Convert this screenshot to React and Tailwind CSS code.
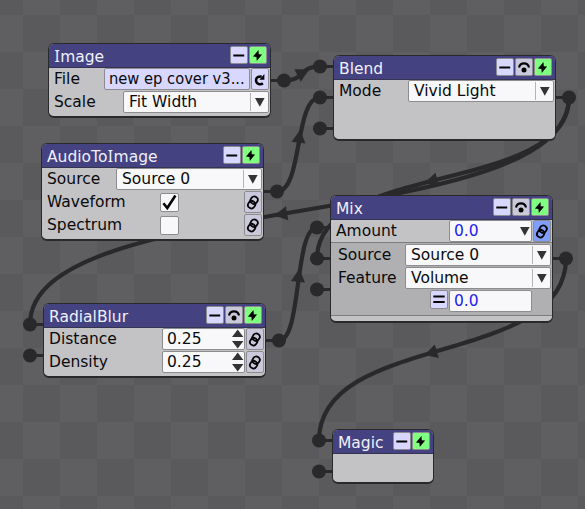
import React from "react";

const INK = "#29292b";

function Text({ children, className = "" }) {
  return <span className={`whitespace-pre leading-[23px] ${className}`}>{children}</span>;
}

// Capital I drawn with serifs
function SerifI() {
  return <span className="inline-block w-[6.2px] text-center font-['Noto_Sans'] leading-none">I</span>;
}

function Btn({ color, children, className = "h-[19px]" }) {
  return (
    <div className={`flex w-[18px] shrink-0 items-center justify-center rounded-[2px] border border-[#8c8c90] ${color} ${className}`}>
      <svg width="16" height="17" viewBox="0 0 16 17" fill="none" stroke="#050505">{children}</svg>
    </div>
  );
}

const Minus = () => (
  <Btn color="bg-[#d7d7ff]" className="h-[18px]"><path d="M2.3 8.5H13.2" strokeWidth="2" /></Btn>
);
const Bypass = () => (
  <Btn color="bg-[#cac9dc]" className="h-[18px]">
    <path d="M3 8.4C4.2 3 11.8 3 13 8.4" strokeWidth="2.2" />
    <circle cx="8" cy="11" r="2.5" fill="#050505" stroke="none" />
  </Btn>
);
const Bolt = () => (
  <Btn color="bg-[#80ff80]" className="h-[18px]">
    <path d="M8.5 3L2.9 9.6L6.4 9.9L6.8 14L12.1 7.6L8.8 7.3Z" fill="#050505" stroke="none" />
  </Btn>
);
const Link = ({ active }) => (
  <Btn color={active ? "bg-[#7f9fff]" : "bg-[#cac9dc]"} className="h-[22px]">
    <g strokeWidth="1.8">
      <rect x="5.7" y="2.5" width="6.8" height="7.4" rx="3.2" transform="rotate(35 9.1 6.2)" />
      <rect x="3.2" y="7" width="6.8" height="7.4" rx="3.2" transform="rotate(35 6.6 10.7)" />
    </g>
  </Btn>
);
const Reload = () => (
  <Btn color="bg-[#d7d7ff]" className="h-[22px]">
    <path d="M11 12.4C8 14.4 4 12.6 4 9.2C4 6.4 6.5 5.2 9.7 5.5" strokeWidth="2.5" />
    <path d="M12.4 3V8.8H7.3Z" fill="#050505" stroke="none" />
  </Btn>
);

function Down() {
  return (
    <svg width="10" height="9" viewBox="0 0 10 9" className="shrink-0"><path d="M0 0H9.6L4.8 8.8Z" fill="#333335" /></svg>
  );
}

function Select({ children }) {
  return (
    <div className="flex h-[22px] w-[146px] shrink-0 items-center rounded-[2px] border border-[#8c8c90] bg-[#f8f8fa] pl-[5px]">
      <Text className="flex-1">{children}</Text>
      <div className="flex h-[18px] w-[18px] items-center justify-center border-l border-[#b4b4b8]"><Down /></div>
    </div>
  );
}

function Spin({ children }) {
  return (
    <div className="flex h-[22px] w-[83px] shrink-0 items-center rounded-[2px] border border-[#8c8c90] bg-[#f8f8fa] pl-[4px]">
      <Text className="flex-1">{children}</Text>
      <svg width="12" height="20" viewBox="0 0 12 20"><path d="M0 8L5.7 .5L11.4 8ZM0 12H11.4L5.7 19.5Z" fill="#333335" /></svg>
    </div>
  );
}

function Row({ label, children, className = "" }) {
  return (
    <div className={`flex h-[22px] items-center gap-px pr-px ${className}`}>
      <Text className="flex-1 pl-[5px]">{label}</Text>
      {children}
    </div>
  );
}

function Check({ on }) {
  return (
    <div className="mr-[64px] h-[19px] w-[19px] rounded-[2px] border border-[#8c8c90] bg-[#f8f8fa]">
      {on && (
        <svg width="17" height="17" viewBox="0 0 17 17" fill="none" stroke="#050505">
          <path d="M2.4 9.2L6.3 14L14.4 1.5" strokeWidth="2.6" />
        </svg>
      )}
    </div>
  );
}

function Node({ place, title, bypass, children }) {
  return (
    <section className={`absolute overflow-hidden rounded-[6px] border border-b-2 border-[#29292b] bg-[#c3c3c5] ${place}`}>
      <header className="flex h-6 items-start gap-px border-b border-[#343350] bg-[#444281] pr-[3px] pt-[2px] text-[#f0f0fa]">
        <Text className="flex-1 pl-[5px]">{title}</Text>
        <Minus />
        {bypass && <Bypass />}
        <Bolt />
      </header>
      <div className="flex flex-col gap-px">{children}</div>
    </section>
  );
}

const ports = [
  [284, 80.5, 1], [320, 66.5, 0], [320, 97.5, 0], [320, 128.5, 0], [277, 191.5, 1], [569, 97.5, 1],
  [317, 227.5, 0], [317, 258.5, 0], [317, 289.5, 0], [566, 258.5, 1], [30, 324.5, 0], [30, 355.5, 0],
  [279, 340.5, 1], [319, 440.5, 0], [319, 471.5, 0],
];

const wires = [
  [284, 80.5, 320, 66.5], [277, 191.5, 320, 97.5], [569, 97.5, 30, 324.5],
  [569, 97.5, 317, 258.5], [279, 340.5, 317, 227.5], [566, 258.5, 319, 440.5],
];

// Forward wires leave their ports sideways, backward ones leave vertically.
function Wire({ x1, y1, x2, y2 }) {
  const dx = x2 - x1;
  const dy = y2 - y1;
  const forward = dx > 0;
  const short = dy * dy < 400;
  const angle = short ? -27 : (Math.atan2(forward ? dy : dy * 0.4, forward ? dx * 0.3 : dx) * 180) / Math.PI;
  const mx = x1 + dx * (forward ? 0.5 : 0.523);
  const my = y1 + dy * (forward ? 0.52 : 0.51);
  const c1 = forward ? `${x1 + dx * 0.6} ${y1}` : `${x1} ${y1 + dy * 0.6}`;
  const c2 = forward ? `${x2 - dx * 0.6} ${y2}` : `${x2} ${y2 - dy * 0.6}`;
  return (
    <g>
      <path d={`M${x1} ${y1}C${c1} ${c2} ${x2} ${y2}`} fill="none" stroke={INK} strokeWidth="4.2" />
      <path d={short ? "M-5 -7L8 0L-5 7Z" : "M0 -7L13 0L0 7Z"} fill={INK} transform={`translate(${mx} ${my}) rotate(${angle})`} />
    </g>
  );
}

export default function App() {
  return (
    <main className="relative h-[509px] w-[585px] overflow-hidden bg-[repeating-conic-gradient(#5f5f61_0_25%,#5a5a5c_0_50%)] bg-[length:74px_74px] bg-[position:23px_15px] font-['DejaVu_Sans',sans-serif] text-[15.5px] text-[#0a0a0c]">
      <svg width="585" height="509" className="absolute inset-0">
        {wires.map(([x1, y1, x2, y2], i) => <Wire key={i} x1={x1} y1={y1} x2={x2} y2={y2} />)}
        {ports.map(([x, y, out], i) => (
          <g key={i}>
            <path d={`M${x} ${y}h${out ? -16 : 16}`} stroke={INK} strokeWidth="3" />
            <circle cx={x} cy={y} r="7" fill={INK} />
          </g>
        ))}
      </svg>

      <Node place="left-[48px] top-[43px] h-[75px] w-[223px]" title={<><SerifI />mage</>}>
        <Row label="File">
          <div className="h-[22px] w-[146px] shrink-0 overflow-hidden rounded-[2px] border border-[#8c8c90] bg-[#d7d7ff] pl-[4px] leading-[21px]">
            <span className="inline-block origin-left scale-x-[.948] whitespace-pre">new ep cover v3...</span>
          </div>
          <Reload />
        </Row>
        <Row label="Scale"><Select>Fit Width</Select></Row>
      </Node>

      <Node place="left-[333px] top-[55px] h-[86px] w-[223px]" title="Blend" bypass>
        <Row label="Mode"><Select>Vivid Light</Select></Row>
      </Node>

      <Node place="left-[41px] top-[143px] h-[98px] w-[223px]" title={<>AudioTo<SerifI />mage</>}>
        <Row label="Source"><Select>Source 0</Select></Row>
        <Row label="Waveform"><Check on /><Link /></Row>
        <Row label="Spectrum"><Check /><Link /></Row>
      </Node>

      <Node place="left-[330px] top-[195px] h-[128px] w-[223px]" title="Mix" bypass>
        <Row label="Amount">
          <div className="flex h-[22px] w-[83px] items-center rounded-[2px] border border-[#8c8c90] bg-[#f8f8fa] pl-[4px] pr-[1px]">
            <Text className="flex-1 text-[#2222f0]">0.0</Text>
            <Down />
          </div>
          <Link active />
        </Row>
        <div className="-mt-px flex h-[74px] flex-col gap-px border-y border-[#7c7c7e] bg-[#b0b0b2] pt-px">
          <Row label="Source" className="pl-[2px]"><Select>Source 0</Select></Row>
          <Row label="Feature" className="pl-[2px]"><Select>Volume</Select></Row>
          <div className="flex items-start justify-end gap-px pr-[20px]">
            <Btn color="bg-[#d7d7ff]"><path d="M2.3 5.5H13.7M2.3 11H13.7" strokeWidth="2.2" /></Btn>
            <div className="flex h-[22px] w-[83px] items-center rounded-[2px] border border-[#8c8c90] bg-[#f8f8fa] pl-[4px]">
              <Text className="text-[#2222f0]">0.0</Text>
            </div>
          </div>
        </div>
      </Node>

      <Node place="left-[43px] top-[303px] h-[75px] w-[223px]" title="RadialBlur" bypass>
        <Row label="Distance"><Spin>0.25</Spin><Link /></Row>
        <Row label="Density"><Spin>0.25</Spin><Link /></Row>
      </Node>

      <Node place="left-[332px] top-[429px] h-[55px] w-[102px]" title="Magic" />
    </main>
  );
}
